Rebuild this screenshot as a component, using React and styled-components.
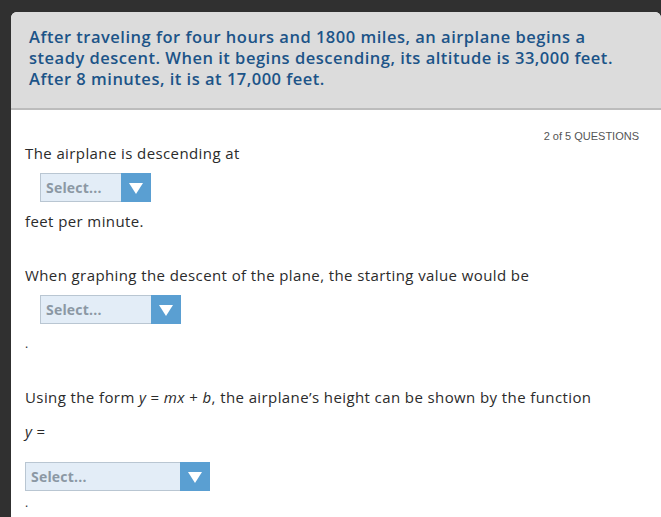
import React from 'react'
import styled, { createGlobalStyle } from 'styled-components'

const GlobalStyle = createGlobalStyle`
    html, body {
        margin: 0;
        padding: 0;
        background: #303030;
        overflow: hidden;
    }
`

const Page = styled.div`
    width: 661px;
    height: 517px;
    padding: 12px 0 0 11px;
    box-sizing: border-box;
    background: #303030;
`

const Card = styled.div`
    width: 650px;
    height: 520px;
    background: #fff;
    border-radius: 6px 6px 0 0;
    overflow: hidden;
`

const Header = styled.div`
    background: #dcdcdc;
    border-bottom: 2px solid #bcbcbc;
    padding: 14px 24px 19px 18px;
    color: #1c5488;
    font-family: "Open Sans", sans-serif;
    font-weight: 600;
    font-size: 16.5px;
    letter-spacing: 0.5px;
    line-height: 21px;
`

const Body = styled.div`
    padding: 19px 22px 0 14px;
    font-family: "Open Sans", sans-serif;
    font-size: 15px;
    letter-spacing: 0.4px;
    color: #2b2b2b;
`

const Counter = styled.div`
    text-align: right;
    font-family: "Liberation Sans", Arial, sans-serif;
    font-size: 11px;
    letter-spacing: 0;
    color: #555;
    line-height: 14px;
`

const Line = styled.div`
    line-height: 20px;
    margin-top: ${({ $top }) => $top || 0}px;
`

const Dot = styled.div`
    line-height: 12px;
    font-size: 12px;
    margin-top: ${({ $top }) => $top || 0}px;
`

const SelectBox = styled.div`
    display: flex;
    width: ${({ $w }) => $w}px;
    height: 29px;
    margin-left: ${({ $indent }) => $indent}px;
    margin-top: ${({ $top }) => $top || 0}px;
    box-sizing: border-box;
    border: 1px solid #b9c6d2;
    background: #e3edf7;
`

const SelectLabel = styled.div`
    flex: 1;
    padding-left: 5px;
    display: flex;
    align-items: center;
    font-family: "Open Sans", sans-serif;
    font-weight: 700;
    font-size: 14px;
    letter-spacing: 0.2px;
    color: #8b98a4;
`

const ArrowButton = styled.div`
    width: 30px;
    margin: -1px -1px -1px 0;
    background: #5a9fd2;
    display: flex;
    align-items: center;
    justify-content: center;
`

const Em = styled.i`
    font-style: italic;
`

const Select = ({ width, indent, top }) => (
    <SelectBox $w={width} $indent={indent} $top={top}>
        <SelectLabel>Select...</SelectLabel>
        <ArrowButton>
            <svg width="14" height="12" viewBox="0 0 14 12">
                <polygon points="0,1 14,1 7,12" fill="#fff" />
            </svg>
        </ArrowButton>
    </SelectBox>
)

const App = () => {
    return (
        <Page>
            <GlobalStyle />
            <Card>
                <Header>
                    After traveling for four hours and 1800 miles, an airplane begins a steady descent. When it begins descending, its altitude is 33,000 feet. After 8 minutes, it is at 17,000 feet.
                </Header>
                <Body>
                    <Counter>2 of 5 QUESTIONS</Counter>
                    <Line $top={0}>The airplane is descending at</Line>
                    <Select width={111} indent={15} top={10} />
                    <Line $top={9}>feet per minute.</Line>
                    <Line $top={34}>When graphing the descent of the plane, the starting value would be</Line>
                    <Select width={141} indent={15} top={10} />
                    <Dot $top={14}>.</Dot>
                    <Line $top={37}>Using the form <Em>y</Em> = <Em>mx</Em> + <Em>b</Em>, the airplane’s height can be shown by the function</Line>
                    <Line $top={14}><Em>y</Em> =</Line>
                    <Select width={185} indent={0} top={21} />
                    <Dot $top={6}>.</Dot>
                </Body>
            </Card>
        </Page>
    )
}

export default App
